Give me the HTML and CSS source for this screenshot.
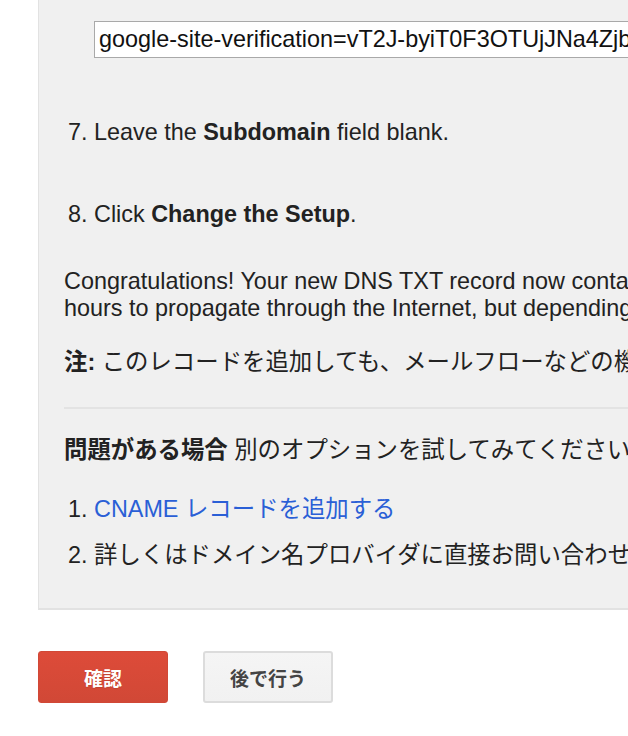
FILE: index.html
```html
<!DOCTYPE html>
<html lang="ja">
<head>
<meta charset="utf-8">
<title>DNS verification</title>
<link rel="stylesheet" href="styles.css">
</head>
<body>
<div class="page">
  <div class="panel">
    <div class="code-row">
      <div class="code-box">google-site-verification=vT2J-byiT0F3OTUjJNa4ZjbQx7KcR2mW9sL</div>
    </div>
    <div class="step step-7">
      <span class="num">7.</span>
      <span class="step-text">Leave the <b>Subdomain</b> field blank.</span>
    </div>
    <div class="step step-8">
      <span class="num">8.</span>
      <span class="step-text">Click <b>Change the Setup</b>.</span>
    </div>
    <p class="congrats">Congratulations! Your new DNS TXT record now contains the verification code. It can take up to 72<br>hours to propagate through the Internet, but depending on your provider it may happen much sooner.</p>
    <p class="note"><b>注:</b> このレコードを追加しても、メールフローなどの機能には影響しません。</p>
    <hr class="divider">
    <p class="trouble"><b>問題がある場合</b> 別のオプションを試してみてください。</p>
    <div class="alt alt-1">
      <span class="num">1.</span>
      <a class="link" href="#">CNAME レコードを追加する</a>
    </div>
    <div class="alt alt-2">
      <span class="num">2.</span>
      <span class="step-text">詳しくはドメイン名プロバイダに直接お問い合わせください。</span>
    </div>
  </div>
  <div class="actions">
    <button class="btn btn-primary" type="button">確認</button>
    <button class="btn btn-secondary" type="button">後で行う</button>
  </div>
</div>
</body>
</html>
```

FILE: styles.css
```css
html, body {
  margin: 0;
  padding: 0;
  background: #ffffff;
  overflow: hidden;
}

body {
  font-family: "Liberation Sans", Arial, "Noto Sans CJK JP", sans-serif;
  font-size: 23.4px;
  color: #222222;
}

.page {
  padding-left: 38px;
  width: 1000px;
}

.panel {
  background: #f0f0f0;
  border-left: 1px solid #e2e2e2;
  border-bottom: 2px solid #e2e2e2;
  padding: 21px 0 39px 25px;
  line-height: 27px;
  white-space: nowrap;
}

.code-row {
  padding-left: 30px;
}

.code-box {
  box-sizing: border-box;
  height: 37px;
  background: #ffffff;
  border: 1px solid #a9a9a9;
  padding: 0 4px;
  line-height: 35px;
  color: #111111;
  width: 800px;
  overflow: hidden;
}

.step, .alt {
  display: flex;
  align-items: baseline;
}

.num {
  box-sizing: border-box;
  width: 30px;
  padding-left: 4px;
  flex: none;
}

.step-7 {
  margin-top: 61px;
}

.step-8 {
  margin-top: 55px;
}

.congrats {
  margin: 40px 0 0 0;
}

.note {
  margin: 27px 0 0 0;
}

.divider {
  margin: 31px 0 0 0;
  border: 0;
  height: 2px;
  background: #e3e3e3;
}

.trouble {
  margin: 28px 0 0 0;
}

.alt-1 {
  margin-top: 32px;
}

.alt-2 {
  margin-top: 19px;
}

.link {
  color: #2a5fd6;
  text-decoration: none;
}

.actions {
  display: flex;
  gap: 35px;
  padding-top: 41px;
}

.btn {
  box-sizing: border-box;
  width: 130px;
  height: 52px;
  border-radius: 3px;
  font-family: "Noto Sans CJK JP", "Liberation Sans", sans-serif;
  font-size: 19px;
  font-weight: 700;
  cursor: pointer;
  padding: 0;
}

.btn-primary {
  background: linear-gradient(#dd4b39, #d14836);
  border: 1px solid #d14836;
  color: #ffffff;
  text-shadow: 0 1px 1px rgba(0, 0, 0, 0.1);
}

.btn-secondary {
  background: linear-gradient(#f5f5f5, #f1f1f1);
  border: 2px solid #dcdcdc;
  color: #444444;
}
```
